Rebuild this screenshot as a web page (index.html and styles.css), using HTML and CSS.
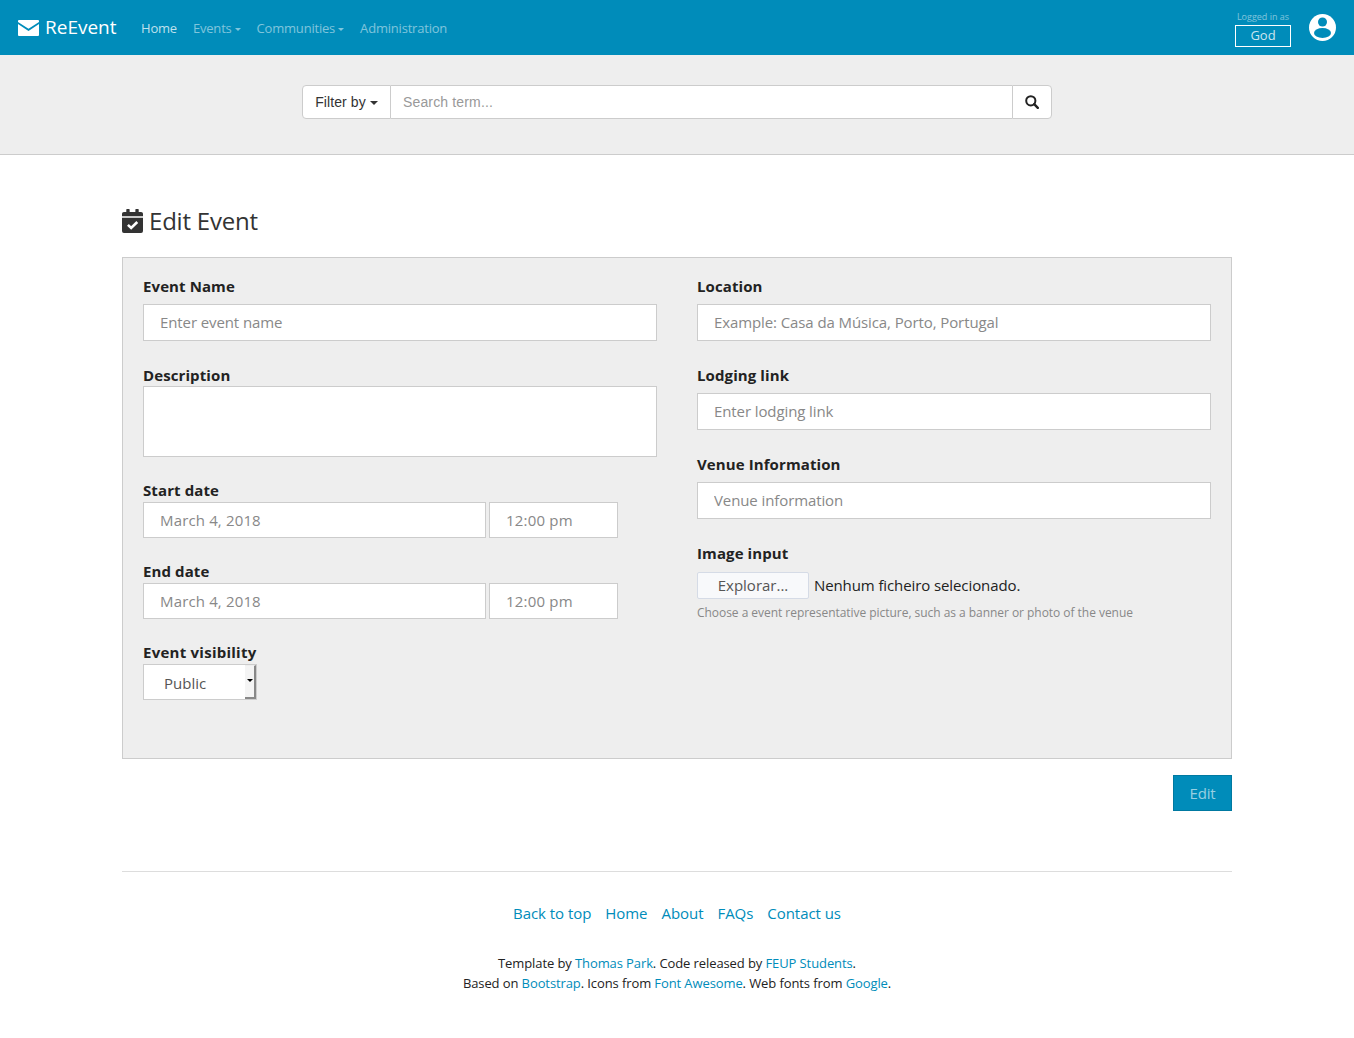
FILE: index.html
```html
<!DOCTYPE html>
<html lang="en">
<head>
<meta charset="utf-8">
<title>ReEvent</title>
<link rel="stylesheet" href="styles.css">
</head>
<body>
<nav class="navbar">
  <a class="brand" href="#">
    <svg class="brand-icon" viewBox="0 0 21 16" width="21" height="16"><path fill="#fff" d="M1 0h19a1 1 0 0 1 1 1v.9l-10.500 6.900L0 1.900V1a1 1 0 0 1 1-1zM0 4l10.500 6.900L21 4v11a1 1 0 0 1-1 1H1a1 1 0 0 1-1-1z"/></svg>
    <span>ReEvent</span>
  </a>
  <ul class="nav-links">
    <li><a class="nav-link active" href="#">Home</a></li>
    <li><a class="nav-link" href="#">Events<i class="caret"></i></a></li>
    <li><a class="nav-link" href="#">Communities<i class="caret"></i></a></li>
    <li><a class="nav-link" href="#">Administration</a></li>
  </ul>
  <div class="user">
    <div class="user-info">
      <span class="logged">Logged in as</span>
      <span class="user-name">God</span>
    </div>
    <svg class="avatar" viewBox="0 0 27 27" width="27" height="27"><circle cx="13.500" cy="13.500" r="13.500" fill="#fff"/><circle cx="13.500" cy="8" r="4.500" fill="#008cba"/><ellipse cx="13.500" cy="19" rx="8.500" ry="5" fill="#008cba"/></svg>
  </div>
</nav>

<section class="search-band">
  <form class="search">
    <button type="button" class="filter">Filter by<i class="caret dark"></i></button>
    <input class="search-input" type="text" placeholder="Search term...">
    <button type="button" class="search-btn" aria-label="Search">
      <svg viewBox="0 0 14 14" width="14" height="14"><circle cx="5.800" cy="5.800" r="4.600" fill="none" stroke="#222" stroke-width="2"/><path d="M9.200 9.200l3.600 3.700" stroke="#222" stroke-width="2.400" stroke-linecap="round"/></svg>
    </button>
  </form>
</section>

<main class="container">
  <h1 class="title">
    <svg viewBox="0 0 22 25" width="21" height="24"><path fill="#333" d="M5 0h2.500a.5.5 0 0 1 .5.500V3h6V.500a.5.5 0 0 1 .5-.500H17a.5.500 0 0 1 .5.500V3H20a2 2 0 0 1 2 2v2.500H0V5a2 2 0 0 1 2-2h2.500V.500A.5.500 0 0 1 5 0zM0 9h22v14a2 2 0 0 1-2 2H2a2 2 0 0 1-2-2z"/><path fill="none" stroke="#fff" stroke-width="2.700" d="M6.200 16.500l3.400 3.300 6.400-6.200"/></svg>
    <span>Edit Event</span>
  </h1>

  <form class="panel">
    <div class="col">
      <div class="group name-group">
        <label>Event Name</label>
        <input class="control tall" type="text" placeholder="Enter event name">
      </div>
      <div class="group desc-group">
        <label>Description</label>
        <textarea class="control area"></textarea>
      </div>
      <div class="group date-group">
        <label>Start date</label>
        <div class="date-row">
          <input class="control date" type="text" placeholder="March 4, 2018">
          <input class="control time" type="text" placeholder="12:00 pm">
        </div>
      </div>
      <div class="group date-group">
        <label>End date</label>
        <div class="date-row">
          <input class="control date" type="text" placeholder="March 4, 2018">
          <input class="control time" type="text" placeholder="12:00 pm">
        </div>
      </div>
      <div class="group visibility-group">
        <label>Event visibility</label>
        <div class="select">
          <span class="select-value">Public</span>
          <span class="select-arrow"><i></i></span>
        </div>
      </div>
    </div>
    <div class="col">
      <div class="group right-group">
        <label>Location</label>
        <input class="control tall" type="text" placeholder="Example: Casa da Música, Porto, Portugal">
      </div>
      <div class="group right-group">
        <label>Lodging link</label>
        <input class="control tall" type="text" placeholder="Enter lodging link">
      </div>
      <div class="group right-group">
        <label>Venue Information</label>
        <input class="control tall" type="text" placeholder="Venue information">
      </div>
      <div class="group">
        <label>Image input</label>
        <div class="file-row">
          <span class="file-btn">Explorar...</span>
          <span class="file-text">Nenhum ficheiro selecionado.</span>
        </div>
        <small class="hint">Choose a event representative picture, such as a banner or photo of the venue</small>
      </div>
    </div>
  </form>

  <div class="actions"><button type="button" class="edit">Edit</button></div>

  <footer class="footer">
    <ul class="foot-links">
      <li><a href="#">Back to top</a></li>
      <li><a href="#">Home</a></li>
      <li><a href="#">About</a></li>
      <li><a href="#">FAQs</a></li>
      <li><a href="#">Contact us</a></li>
    </ul>
    <p class="credits">Template by <a href="#">Thomas Park</a>. Code released by <a href="#">FEUP Students</a>.<br>Based on <a href="#">Bootstrap</a>. Icons from <a href="#">Font Awesome</a>. Web fonts from <a href="#">Google</a>.</p>
  </footer>
</main>
</body>
</html>
```

FILE: styles.css
```css
* { box-sizing: border-box; }
html, body { margin: 0; padding: 0; }
body {
  font-family: "Open Sans", sans-serif;
  font-size: 15px;
  line-height: 21px;
  color: #222;
  background: #fff;
}
a { color: #008cba; text-decoration: none; }

.navbar {
  height: 55px;
  background: #008cba;
  display: flex;
  align-items: center;
  padding: 0 18px;
}
.brand {
  display: flex;
  align-items: center;
  gap: 6px;
  color: #fff;
  font-size: 19px;
  width: 115px;
}
.brand-icon { flex: none; }
.nav-links {
  list-style: none;
  margin: 0 0 0 8px;
  padding: 0;
  display: flex;
  gap: 16px;
}
.nav-link {
  font-size: 13px;
  letter-spacing: -0.2px;
  color: rgba(255,255,255,.5);
}
.nav-link.active { color: rgba(255,255,255,.75); }
.caret {
  display: inline-block;
  width: 0;
  height: 0;
  margin-left: 3px;
  vertical-align: middle;
  border-top: 3.500px solid currentColor;
  border-left: 3.500px solid transparent;
  border-right: 3.500px solid transparent;
}
.caret.dark { margin-left: 4px; border-top: 4px solid #333; border-left: 4px solid transparent; border-right: 4px solid transparent; }
.user {
  margin-left: auto;
  display: flex;
  align-items: center;
  gap: 18px;
}
.user-info { display: flex; flex-direction: column; align-items: center; margin-top: 3px; }
.logged { font-size: 9px; line-height: 12px; margin-bottom: 2px; color: rgba(255,255,255,.5); }
.user-name {
  width: 56px;
  height: 22px;
  border: 1px solid #fff;
  color: rgba(255,255,255,.8);
  font-size: 13px;
  line-height: 19px;
  text-align: center;
}
.avatar { display: block; }

.search-band {
  height: 100px;
  background: #eee;
  border-bottom: 1px solid #ccc;
  padding-top: 30px;
}
.search {
  width: 750px;
  height: 34px;
  margin: 0 auto;
  display: flex;
  font-family: "Liberation Sans", Arial, sans-serif;
  font-size: 14px;
}
.filter, .search-input, .search-btn {
  height: 34px;
  background: #fff;
  border: 1px solid #ccc;
  font: inherit;
  color: #333;
}
.filter { width: 89px; border-radius: 4px 0 0 4px; padding: 0; letter-spacing: 0.1px; }
.search-input { flex: 1; min-width: 0; border-left: 0; border-right: 0; padding: 0 12px; outline: 0; letter-spacing: 0.15px; }
.search-input::placeholder { color: #999; opacity: 1; }
.search-btn { width: 40px; border-radius: 0 4px 4px 0; padding: 0; display: flex; align-items: center; justify-content: center; }

.container { width: 1110px; margin: 0 auto; }
.title {
  margin: 51px 0 21px;
  height: 30px;
  display: flex;
  align-items: center;
  gap: 6px;
  font-size: 24px;
  font-weight: 400;
  line-height: 30px;
  letter-spacing: -0.2px;
  color: #333;
}
.panel {
  display: grid;
  grid-template-columns: 514px 514px;
  gap: 40px;
  height: 502px;
  padding: 19px 20px 20px;
  background: #eee;
  border: 1px solid #ccc;
}
.group label {
  display: block;
  font-weight: 700;
  font-size: 15px;
  line-height: 19px;
  letter-spacing: 0.1px;
  color: #222;
  margin-bottom: 8px;
}
.name-group { margin-bottom: 25px; }
.desc-group { margin-bottom: 24px; }
.desc-group label { margin-bottom: 1px; }
.date-group { margin-bottom: 24px; }
.date-group label { margin-bottom: 2px; }
.visibility-group label { letter-spacing: 0.25px; }
.right-group { margin-bottom: 25px; }
.control {
  display: block;
  background: #fff;
  border: 1px solid #ccc;
  font: inherit;
  color: #555;
  padding: 0 16px;
  outline: 0;
  border-radius: 0;
}
.control::placeholder { color: #888; opacity: 1; }
.tall { width: 100%; height: 37px; padding-bottom: 2px; letter-spacing: -0.1px; }
.area { width: 100%; height: 71px; resize: none; }
.date-row { display: flex; gap: 3px; }
.date { width: 343px; height: 36px; letter-spacing: 0.15px; }
.time { width: 129px; height: 36px; letter-spacing: 0.2px; }
.select {
  width: 114px;
  height: 36px;
  display: flex;
  background: #fff;
  border: 1px solid #ccc;
  margin-top: -6px;
}
.select-value { flex: 1; padding-left: 20px; line-height: 37px; color: #555; }
.select-arrow {
  width: 11px;
  background: #f4f4f4;
  border-right: 2px solid #888;
  border-bottom: 2px solid #888;
  border-top: 1px solid #eee;
  display: flex;
  align-items: center;
  justify-content: flex-end;
  padding-right: 1px;
}
.select-arrow i {
  display: block;
  width: 0;
  height: 0;
  margin-top: -2px;
  border-top: 3px solid #000;
  border-left: 3px solid transparent;
  border-right: 3px solid transparent;
}
.file-row { display: flex; align-items: center; gap: 5px; height: 27px; margin-top: 9px; }
.file-btn {
  width: 112px;
  height: 27px;
  background: #f8f9fb;
  border: 1px solid #d5dbe6;
  border-radius: 2px;
  color: #555;
  line-height: 25px;
  text-align: center;
}
.file-text { color: #222; letter-spacing: -0.1px; }
.hint { display: block; margin-top: 5px; font-size: 12px; line-height: 18px; letter-spacing: -0.04px; color: #888; }

.actions { display: flex; justify-content: flex-end; margin-top: 16px; }
.edit {
  width: 59px;
  height: 36px;
  background: #008cba;
  border: 1px solid #0079a1;
  color: rgba(255,255,255,.6);
  font: inherit;
  letter-spacing: -0.2px;
  padding: 0;
}
.footer { margin-top: 60px; border-top: 1px solid #ddd; padding-top: 31px; text-align: center; }
.foot-links {
  list-style: none;
  margin: 0;
  padding: 0;
  display: flex;
  justify-content: center;
  gap: 14px;
  letter-spacing: -0.05px;
}
.credits { margin: 29px 0 0; font-size: 13px; line-height: 20px; letter-spacing: -0.1px; color: #222; }
```
